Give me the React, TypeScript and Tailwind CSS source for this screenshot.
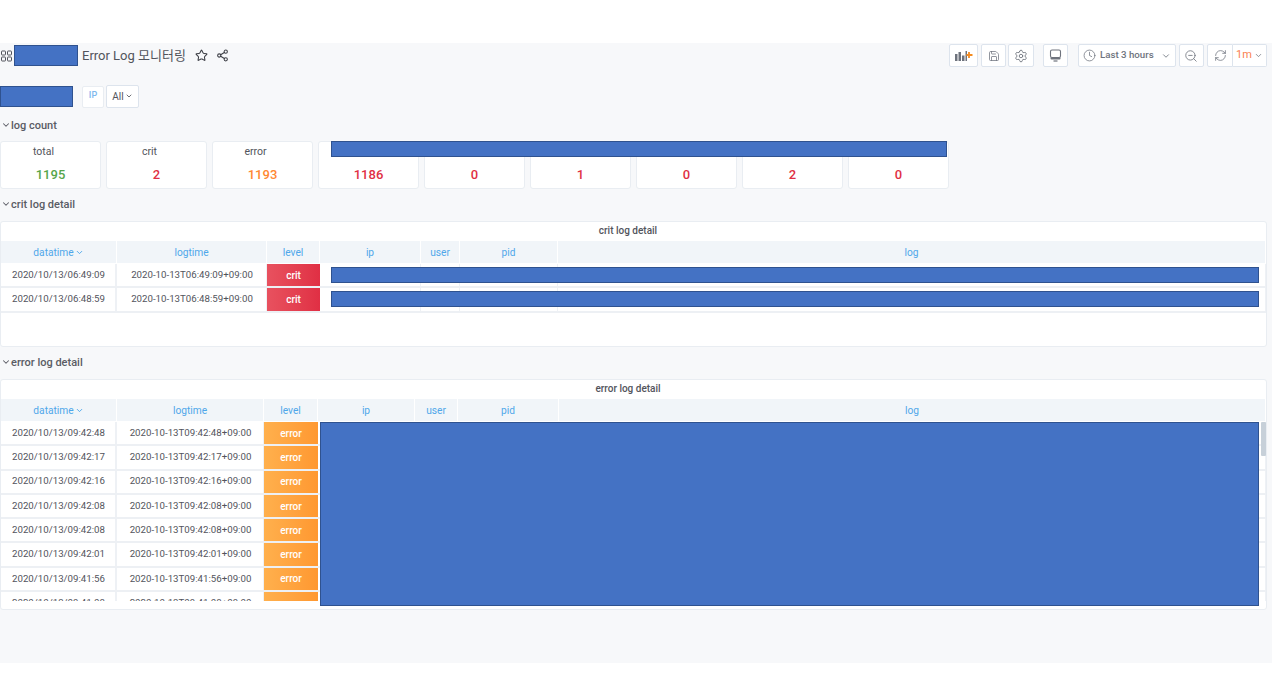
import React from "react";
import { ChevronDown, Clock, RefreshCw, Save, Settings, Share2, Star, ZoomOut } from "lucide-react";

const toolButton = "flex h-[23px] items-center justify-center rounded-[2px] border border-[#dde4ed] bg-white text-[#6e737d]";

function Row({ title }: { title: string }) {
  return (
    <div className="flex h-[16px] items-center pl-[1px] text-[11px] font-medium leading-4 text-[#5a5c64]">
      <ChevronDown size={10} strokeWidth={2.5} className="shrink-0" />
      <span className="pt-[2px]">{title}</span>
    </div>
  );
}

function Stat({ label, value, color, labelX }: { label?: string; value: string; color: string; labelX?: string }) {
  return (
    <div className="flex h-[48px] w-[101px] shrink-0 flex-col rounded-[3px] border border-[#e9edf2] bg-white">
      <div className={`h-[23px] pt-[2px] text-center text-[10.5px] leading-4 text-[#52545c] ${labelX ?? ""}`}>{label}</div>
      <div className={`text-center text-[13px] font-medium leading-5 ${color}`}>{value}</div>
    </div>
  );
}

type Col = { name: string; cls: string };

function Table({
  title, cols, rows, level, levelCls, bodyCls,
}: {
  title: string;
  cols: Col[];
  rows: [string, string][];
  level: string;
  levelCls: string;
  bodyCls: string;
}) {
  return (
    <div className="flex flex-col">
      <div className="h-[19px] pr-[11px] text-center text-[10px] font-medium leading-[17px] text-[#52545c]">{title}</div>
      <div className="flex h-[22px] bg-[#f1f5f9]">
        {cols.map((c, i) => (
          <div key={c.name} className={`flex items-center justify-center border-r border-white pt-[1px] text-[10.2px] text-[#4fa7ea] ${c.cls}`}>
            {c.name}
            {i === 0 && <ChevronDown size={9} strokeWidth={2.5} className="ml-[1px]" />}
          </div>
        ))}
      </div>
      <div className={`overflow-hidden pt-[1px] ${bodyCls}`}>
        {rows.map(([a, b], r) => (
          <div key={r} className="flex h-[24.3px] border-b-2 border-[#edf0f4] text-[9.7px] text-[#52545c]">
            <div className={`flex items-center justify-center border-r-2 border-[#eef1f5] pl-[1px] ${cols[0].cls}`}>{a}</div>
            <div className={`flex items-center justify-center border-r border-[#eef1f5] pl-[1px] ${cols[1].cls}`}>{b}</div>
            <div className={`flex items-center justify-center text-[10px] font-medium text-white ${levelCls} ${cols[2].cls}`}>{level}</div>
            {cols.slice(3).map((c) => (
              <div key={c.name} className={`border-r border-[#eef1f5] ${c.cls}`} />
            ))}
          </div>
        ))}
      </div>
    </div>
  );
}

const critCols: Col[] = [
  { name: "datatime", cls: "w-[116px]" },
  { name: "logtime", cls: "w-[150px]" },
  { name: "level", cls: "w-[53px]" },
  { name: "ip", cls: "w-[101px]" },
  { name: "user", cls: "w-[39px]" },
  { name: "pid", cls: "w-[98px]" },
  { name: "log", cls: "flex-1" },
];

const errCols: Col[] = [
  { name: "datatime", cls: "w-[116px]" },
  { name: "logtime", cls: "w-[147px]" },
  { name: "level", cls: "w-[54px]" },
  { name: "ip", cls: "w-[97px]" },
  { name: "user", cls: "w-[43px]" },
  { name: "pid", cls: "w-[101px]" },
  { name: "log", cls: "flex-1" },
];

const critRows: [string, string][] = [
  ["2020/10/13/06:49:09", "2020-10-13T06:49:09+09:00"],
  ["2020/10/13/06:48:59", "2020-10-13T06:48:59+09:00"],
];

const errRows: [string, string][] = [
  ["2020/10/13/09:42:48", "2020-10-13T09:42:48+09:00"],
  ["2020/10/13/09:42:17", "2020-10-13T09:42:17+09:00"],
  ["2020/10/13/09:42:16", "2020-10-13T09:42:16+09:00"],
  ["2020/10/13/09:42:08", "2020-10-13T09:42:08+09:00"],
  ["2020/10/13/09:42:08", "2020-10-13T09:42:08+09:00"],
  ["2020/10/13/09:42:01", "2020-10-13T09:42:01+09:00"],
  ["2020/10/13/09:41:56", "2020-10-13T09:41:56+09:00"],
  ["2020/10/13/09:41:08", "2020-10-13T09:41:08+09:00"],
];

const redact = "absolute border border-[#2f528f] bg-[#4472c4]";

export default function App() {
  return (
    <div className="min-h-[689px] bg-white pt-[43px] font-['Roboto','Noto_Sans_CJK_KR',sans-serif]">
      <div className="h-[620px] bg-[#f7f8fa]">
        {/* Top navigation */}
        <div className="flex h-[25px] items-center">
          <svg width="14" height="14" viewBox="0 0 14 14" fill="none" stroke="#52545c" className="shrink-0" aria-hidden="true">
            <rect x="1.500" y="2" width="4" height="4" rx="0.600" />
            <rect x="7.500" y="2" width="4" height="4" rx="0.600" />
            <rect x="1.500" y="8" width="4" height="4" rx="0.600" />
            <rect x="7.500" y="8" width="4" height="4" rx="0.600" />
          </svg>
          <div className="h-[21px] w-[64px] shrink-0 border border-[#2f528f] bg-[#4472c4]" />
          <span className="ml-[4px] text-[13px] leading-[20px] text-[#52545c]">Error Log 모니터링</span>
          <Star size={13} strokeWidth={1.9} className="ml-[9px] text-[#3b3d44]" />
          <Share2 size={13} strokeWidth={1.9} className="ml-[8px] text-[#3b3d44]" />
          <div className="ml-auto flex items-center pr-[5px]">
            <div className={`${toolButton} w-[29px]`}>
              <svg width="18" height="11" viewBox="0 0 18 11" aria-hidden="true">
                <path d="M0 4h2.5v7H0zM3.5 2h2.5v9H3.5zM7 5.500h2.500V11H7zM10.500 1H12v10h-1.500z" fill="#6e737d" />
                <path d="M14 2v6M11.500 5h6" stroke="#f58b1f" strokeWidth="1.800" />
              </svg>
            </div>
            <div className={`${toolButton} ml-[3px] w-[25px]`}><Save size={12} strokeWidth={1.5} /></div>
            <div className={`${toolButton} ml-[2px] w-[26px]`}><Settings size={14} strokeWidth={1.5} /></div>
            <div className={`${toolButton} ml-[9px] w-[25px]`}>
              <svg width="13" height="13" viewBox="0 0 13 13" fill="none" aria-hidden="true">
                <rect x="1.500" y="1" width="10" height="7.500" rx="1.500" stroke="#6e737d" strokeWidth="1.100" />
                <path d="M1.500 8.500h10v1a1 1 0 0 1-1 1h-8a1 1 0 0 1-1-1z" fill="#6e737d" />
                <path d="M4.500 12h4" stroke="#6e737d" strokeWidth="1.200" />
              </svg>
            </div>
            <div className={`${toolButton} ml-[10px] w-[98px] pl-[4px] pr-[4px] text-[9.7px]`}>
              <Clock size={13} strokeWidth={1.4} className="shrink-0" />
              <span className="ml-[4px] font-medium">Last 3 hours</span>
              <ChevronDown size={10} strokeWidth={2} className="ml-auto" />
            </div>
            <div className={`${toolButton} ml-[3px] w-[25px]`}><ZoomOut size={14} strokeWidth={1.4} className="-translate-x-px" /></div>
            <div className={`${toolButton} ml-[3px] w-[26px] rounded-r-none`}><RefreshCw size={13} strokeWidth={1.4} /></div>
            <div className={`${toolButton} w-[34px] rounded-l-none border-l-0 text-[11px] text-[#fa7f4f]`}>
              1m
              <ChevronDown size={9} strokeWidth={2} className="ml-[2px] text-[#6e737d]" />
            </div>
          </div>
        </div>

        {/* Variables */}
        <div className="mt-[17px] flex h-[23px] items-center">
          <div className="h-[21px] w-[73px] border border-[#2f528f] bg-[#4472c4]" />
          <div className="ml-[9px] flex h-[22px] w-[22px] items-center justify-center rounded-[2px] border border-[#e9edf2] bg-white pb-[1px] text-[9px] font-medium text-[#7db8ee]">IP</div>
          <div className="ml-[2px] flex h-[23px] w-[33px] items-center justify-center rounded-[2px] border border-[#dde4ed] bg-white pb-[1px] text-[10px] text-[#52545c]">
            All<ChevronDown size={8} strokeWidth={2.500} className="ml-[1px]" />
          </div>
        </div>

        <div className="mt-[9px]"><Row title="log count" /></div>

        {/* Stats */}
        <div className="relative mt-[8px] flex gap-[5px]">
          <Stat label="total" value="1195" color="text-[#56a64b]" labelX="pr-[14px]" />
          <Stat label="crit" value="2" color="text-[#e02f44]" labelX="pr-[14px]" />
          <Stat label="error" value="1193" color="text-[#ff8833]" labelX="pr-[14px]" />
          <Stat value="1186" color="text-[#e02f44]" />
          <Stat value="0" color="text-[#e02f44]" />
          <Stat value="1" color="text-[#e02f44]" />
          <Stat value="0" color="text-[#e02f44]" />
          <Stat value="2" color="text-[#e02f44]" />
          <Stat value="0" color="text-[#e02f44]" />
          <div className={`${redact} left-[331px] top-0 h-[16px] w-[616px]`} />
        </div>

        <div className="mt-[7px]"><Row title="crit log detail" /></div>

        {/* Crit table */}
        <div className="relative mt-[9px] mr-[5px] h-[126px] rounded-[3px] border border-[#e9edf2] bg-white">
          <Table
            title="crit log detail"
            cols={critCols}
            rows={critRows}
            level="crit"
            levelCls="bg-gradient-to-r from-[#e8515f] to-[#e02f44]"
            bodyCls=""
          />
          <div className={`${redact} left-[330px] top-[45px] h-[16px] w-[928px]`} />
          <div className={`${redact} left-[330px] top-[69px] h-[16px] w-[928px]`} />
        </div>

        <div className="mt-[7px]"><Row title="error log detail" /></div>

        {/* Error table */}
        <div className="relative mt-[9px] mr-[5px] h-[231px] rounded-[3px] border border-[#e9edf2] bg-white">
          <Table
            title="error log detail"
            cols={errCols}
            rows={errRows}
            level="error"
            levelCls="bg-gradient-to-r from-[#ffb04d] to-[#ff9830]"
            bodyCls="h-[180px]"
          />
          <div className={`${redact} left-[319px] top-[42px] h-[184px] w-[939px]`} />
          <div className="absolute right-0 top-[42px] h-[34px] w-[5px] rounded-[1px] bg-[#c7d0d9]" />
        </div>
      </div>
    </div>
  );
}
